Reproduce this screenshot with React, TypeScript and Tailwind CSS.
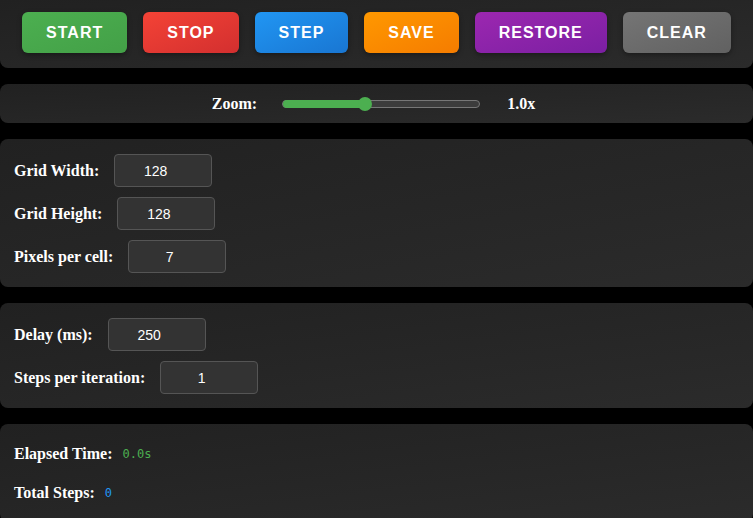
import React from "react";

const buttons = [
  { label: "START", cls: "from-[#4caf50] to-[#43a047]" },
  { label: "STOP", cls: "from-[#f44336] to-[#d32f2f]" },
  { label: "STEP", cls: "from-[#2196f3] to-[#1976d2]" },
  { label: "SAVE", cls: "from-[#ff9800] to-[#f57c00]" },
  { label: "RESTORE", cls: "from-[#9c27b0] to-[#7b1fa2]" },
  { label: "CLEAR", cls: "from-[#757575] to-[#616161]" },
];

const serif = "font-['Liberation_Serif','Times_New_Roman',serif] font-bold text-[16px] text-white";
const panel = "bg-linear-to-br from-[#212121] to-[#2b2b2b] rounded-lg";

function Field({ label, value }: { label: string; value: string }) {
  return (
    <div className="flex items-center">
      <span className={serif}>{label}</span>
      <input
        type="number"
        readOnly
        defaultValue={value}
        className="ml-[15px] w-[98px] h-[33px] px-2 bg-[#333] border border-[#555] rounded-[4px] text-center text-white text-[14px] font-['Liberation_Sans',Arial,sans-serif] outline-none"
      />
    </div>
  );
}

export default function App() {
  const zoomPct = 42;
  return (
    <div className="bg-black min-h-[518px] w-[753px] overflow-hidden flex flex-col gap-4">
      {/* Controls */}
      <div className={`${panel} rounded-t-none pt-3 pb-[15px] flex justify-center gap-4`}>
        {buttons.map((b) => (
          <button
            key={b.label}
            className={`h-[41px] px-6 rounded-md bg-linear-to-br ${b.cls} text-white font-bold text-[16px] tracking-[1px] font-['Liberation_Sans',Arial,sans-serif] shadow-[0_2px_5px_rgba(0,0,0,0.35)]`}
          >
            {b.label}
          </button>
        ))}
      </div>

      {/* Zoom */}
      <div className={`${panel} h-[39px] pr-[6px] flex items-center justify-center`}>
        <span className={serif}>Zoom:</span>
        <div className="relative ml-[25px] w-[198px] h-[8px] rounded-full border border-[#777] bg-[#3c3c3c]">
          <div className="absolute left-0 top-[-1px] h-[8px] rounded-full bg-[#4caf50]" style={{ width: `${zoomPct}%` }} />
          <div
            className="absolute top-1/2 w-[14px] h-[14px] -translate-x-1/2 -translate-y-1/2 rounded-full bg-[#4caf50]"
            style={{ left: `${zoomPct}%` }}
          />
        </div>
        <span className={`${serif} ml-[27px]`}>1.0x</span>
      </div>

      {/* Grid */}
      <div className={`${panel} px-[14px] pt-[15px] pb-[14px] flex flex-col gap-[10px]`}>
        <Field label="Grid Width:" value="128" />
        <Field label="Grid Height:" value="128" />
        <Field label="Pixels per cell:" value="7" />
      </div>

      {/* Timing */}
      <div className={`${panel} px-[14px] pt-[15px] pb-[14px] flex flex-col gap-[10px]`}>
        <Field label="Delay (ms):" value="250" />
        <Field label="Steps per iteration:" value="1" />
      </div>

      {/* Stats */}
      <div className={`${panel} px-[14px] pt-[16px] pb-[15px] flex flex-col gap-[11px]`}>
        <div className="h-[28px] flex items-center">
          <span className={serif}>Elapsed Time:</span>
          <span className="ml-[10px] text-[12px] text-[#4caf50] font-['DejaVu_Sans_Mono',monospace]">0.0s</span>
        </div>
        <div className="h-[28px] flex items-center">
          <span className={serif}>Total Steps:</span>
          <span className="ml-[10px] text-[12px] text-[#2196f3] font-['DejaVu_Sans_Mono',monospace]">0</span>
        </div>
      </div>
    </div>
  );
}
